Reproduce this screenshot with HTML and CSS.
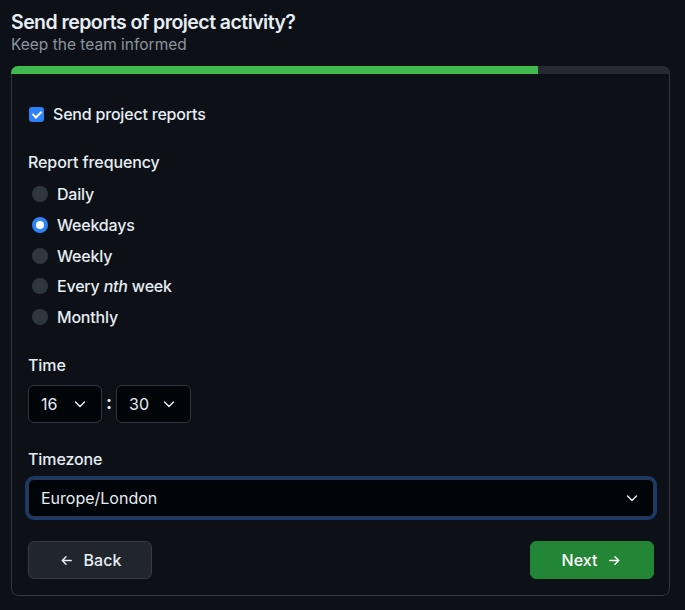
FILE: index.html
```html
<!DOCTYPE html>
<html lang="en">
<head>
<meta charset="utf-8">
<title>Send reports</title>
<link rel="stylesheet" href="styles.css">
</head>
<body>
<header class="header">
  <h1 class="title">Send reports of project activity?</h1>
  <p class="subtitle">Keep the team informed</p>
</header>
<section class="card">
  <div class="progress"><div class="progress-fill" style="width:80%"></div></div>
  <div class="card-body">
    <label class="check-row">
      <input type="checkbox" class="checkbox" checked>
      <span>Send project reports</span>
    </label>

    <div class="group">
      <div class="label">Report frequency</div>
      <div class="radios">
        <label class="radio-row"><input type="radio" name="f" class="radio"><span>Daily</span></label>
        <label class="radio-row"><input type="radio" name="f" class="radio" checked><span>Weekdays</span></label>
        <label class="radio-row"><input type="radio" name="f" class="radio"><span>Weekly</span></label>
        <label class="radio-row"><input type="radio" name="f" class="radio"><span>Every <em>nth</em> week</span></label>
        <label class="radio-row"><input type="radio" name="f" class="radio"><span>Monthly</span></label>
      </div>
    </div>

    <div class="group">
      <div class="label">Time</div>
      <div class="time-row">
        <div class="select small"><span>16</span><svg class="chev" viewBox="0 0 16 16"><path d="M3.5 6l4.5 4.5L12.5 6"/></svg></div>
        <span class="colon">:</span>
        <div class="select small"><span>30</span><svg class="chev" viewBox="0 0 16 16"><path d="M3.5 6l4.5 4.5L12.5 6"/></svg></div>
      </div>
    </div>

    <div class="group">
      <div class="label">Timezone</div>
      <div class="select wide focus"><span>Europe/London</span><svg class="chev" viewBox="0 0 16 16"><path d="M3.5 6l4.5 4.5L12.5 6"/></svg></div>
    </div>

    <div class="actions">
      <button class="btn btn-back"><svg class="arrow" viewBox="0 0 16 16"><path d="M13 8H3.5M7.5 4L3.5 8l4 4"/></svg>Back</button>
      <button class="btn btn-next">Next<svg class="arrow" viewBox="0 0 16 16"><path d="M3 8h9.5M8.5 4l4 4-4 4"/></svg></button>
    </div>
  </div>
</section>
</body>
</html>
```

FILE: styles.css
```css
* { box-sizing: border-box; }
html, body { background: #0d1117; }
body {
  margin: 0;
  padding: 9px 15px 0 11px;
  font-family: Inter, "Noto Sans", "Liberation Sans", sans-serif;
  color: #e6edf3;
  font-size: 16px;
}
.title {
  margin: 0;
  font-size: 19.5px;
  font-weight: 600;
  line-height: 26px;
  letter-spacing: -0.55px;
}
.subtitle {
  margin: 0;
  font-size: 15.5px;
  line-height: 20px;
  color: #8b949e;
}
.card {
  margin-top: 11px;
  border-radius: 7px;
  overflow: hidden;
  width: 659px;
}
.progress {
  height: 8px;
  background: #262b32;
}
.progress-fill {
  height: 100%;
  background: #3fb950;
}
.card-body {
  border: 1px solid #30363d;
  border-top: none;
  border-radius: 0 0 7px 7px;
  padding: 28px 15px 16px 16px;
  display: flex;
  flex-direction: column;
  gap: 24px;
}
.check-row, .radio-row {
  display: flex;
  align-items: center;
  height: 24px;
  font-weight: 500;
  letter-spacing: -0.2px;
}
.checkbox {
  appearance: none;
  margin: 0 9px 0 1px;
  width: 15px;
  height: 15px;
  border-radius: 3px;
  background: #2f81f7;
  position: relative;
}
.checkbox:checked::after {
  content: "";
  position: absolute;
  left: 4.5px;
  top: 2px;
  width: 4px;
  height: 7px;
  border: solid #fff;
  border-width: 0 2px 2px 0;
  transform: rotate(45deg);
}
.group { display: flex; flex-direction: column; gap: 8px; }
.label { line-height: 24px; font-weight: 450; letter-spacing: -0.1px; }
.radios { display: flex; flex-direction: column; gap: 6.75px; }
.radio {
  appearance: none;
  margin: 0 9px 0 4px;
  width: 16px;
  height: 16px;
  border-radius: 50%;
  background: #30363d;
}
.radio:checked {
  background: #fff;
  border: 4px solid #2f81f7;
}
.time-row { display: flex; align-items: center; }
.colon { width: 14px; text-align: center; font-weight: 700; font-size: 18px; line-height: 1; padding-bottom: 3px; }
.select {
  display: flex;
  align-items: center;
  justify-content: space-between;
  height: 38px;
  background: #010409;
  border: 1px solid #30363d;
  border-radius: 6px;
  padding: 0 13px 0 12px;
  font-size: 16px;
}
.select.small { width: 74px; }
.select.small + .colon + .select.small { width: 75px; }
.select.wide { width: 626px; height: 38px; }
.select.focus { box-shadow: 0 0 0 3px #193a6a; border-color: #30363d; }
.chev {
  width: 16px; height: 16px;
  fill: none; stroke: #e6edf3; stroke-width: 1.5; stroke-linecap: round; stroke-linejoin: round;
}
.actions {
  display: flex;
  justify-content: space-between;
}
.btn {
  width: 124px;
  height: 38px;
  border-radius: 6px;
  font-family: inherit;
  font-size: 16px;
  font-weight: 500;
  display: flex;
  align-items: center;
  justify-content: center;
  gap: 10px;
  color: #e6edf3;
}
.btn-back { background: #21262d; border: 1px solid #363b42; }
.btn-next { background: #238636; border: 1px solid #238636; color: #fff; }
.arrow {
  width: 15px; height: 15px;
  fill: none; stroke: currentColor; stroke-width: 1.6; stroke-linecap: round; stroke-linejoin: round;
}
```
